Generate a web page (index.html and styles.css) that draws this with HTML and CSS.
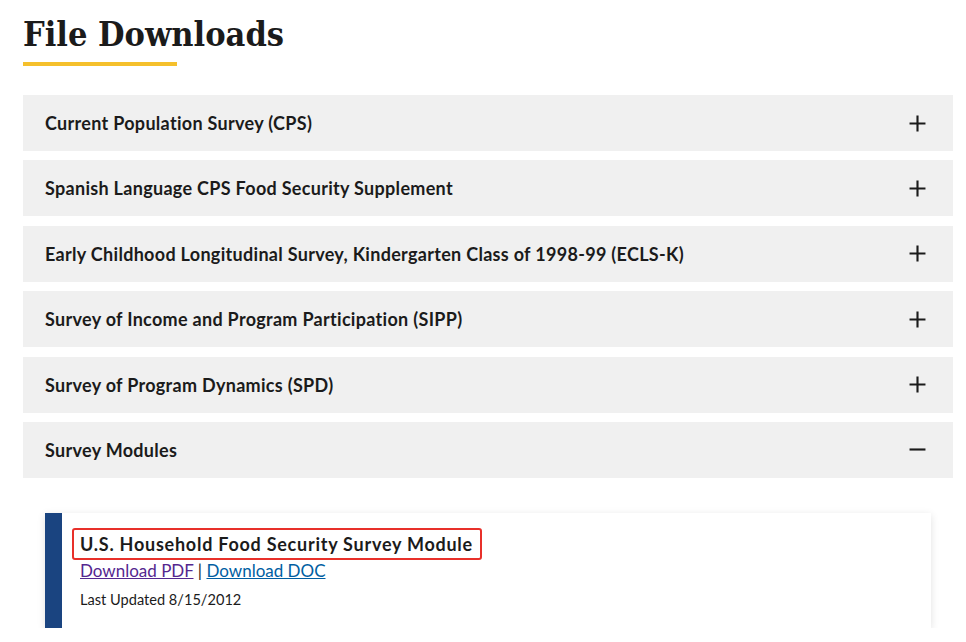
FILE: index.html
```html
<!DOCTYPE html>
<html lang="en">
<head>
<meta charset="utf-8">
<title>File Downloads</title>
<link rel="stylesheet" href="styles.css">
</head>
<body>
<main class="page">
  <h1 class="page-title">File Downloads</h1>
  <div class="accordion">
    <button class="acc-btn"><span>Current Population Survey (CPS)</span><svg class="acc-icon" viewBox="0 0 16 16"><path d="M8 0.5v15M0.5 8h15"/></svg></button>
    <button class="acc-btn"><span>Spanish Language CPS Food Security Supplement</span><svg class="acc-icon" viewBox="0 0 16 16"><path d="M8 0.5v15M0.5 8h15"/></svg></button>
    <button class="acc-btn"><span>Early Childhood Longitudinal Survey, Kindergarten Class of 1998-99 (ECLS-K)</span><svg class="acc-icon" viewBox="0 0 16 16"><path d="M8 0.5v15M0.5 8h15"/></svg></button>
    <button class="acc-btn"><span>Survey of Income and Program Participation (SIPP)</span><svg class="acc-icon" viewBox="0 0 16 16"><path d="M8 0.5v15M0.5 8h15"/></svg></button>
    <button class="acc-btn"><span>Survey of Program Dynamics (SPD)</span><svg class="acc-icon" viewBox="0 0 16 16"><path d="M8 0.5v15M0.5 8h15"/></svg></button>
    <button class="acc-btn open"><span>Survey Modules</span><svg class="acc-icon" viewBox="0 0 16 16"><path d="M0.5 8h15"/></svg></button>
    <div class="acc-panel">
      <div class="card">
        <h3 class="card-title">U.S. Household Food Security Survey Module</h3>
        <div class="card-links"><a href="#" class="visited">Download PDF</a> | <a href="#">Download DOC</a></div>
        <p class="card-date">Last Updated 8/15/2012</p>
      </div>
    </div>
  </div>
</main>
</body>
</html>
```

FILE: styles.css
```css
* { box-sizing: border-box; }
html, body { margin: 0; padding: 0; background: #fff; }
body {
  font-family: "Lato", "Open Sans", sans-serif;
  color: #1b1b1b;
}
.page {
  padding: 0 13px 0 23px;
}
.page-title {
  font-family: "DejaVu Serif Condensed", "DejaVu Serif", serif;
  font-weight: bold;
  font-size: 34px;
  line-height: 40px;
  margin: 0;
  padding-top: 14px;
  color: #1b1b1b;
}
.page-title::after {
  content: "";
  display: block;
  width: 154px;
  height: 4px;
  background: #f5c02c;
  margin-top: 8px;
}
.accordion {
  margin-top: 29px;
  display: flex;
  flex-direction: column;
  gap: 9.4px;
}
.acc-btn {
  display: flex;
  align-items: center;
  justify-content: space-between;
  width: 100%;
  height: 56px;
  padding: 0 27px 0 22px;
  border: 0;
  background: #f0f0f0;
  font-family: inherit;
  font-weight: bold;
  font-size: 18px;
  letter-spacing: 0.3px;
  color: #1b1b1b;
  text-align: left;
}
.acc-icon {
  width: 17px;
  height: 17px;
  fill: none;
  stroke: #1b1b1b;
  stroke-width: 2;
}
.acc-panel {
  padding: 26px 22px 0 22px;
}
.card {
  background: #fff;
  border-left: 17px solid #1a4480;
  box-shadow: 0 2px 8px rgba(0,0,0,0.12);
  padding: 15px 18px 16px 18px;
  height: 115px;
}
.card-title {
  display: inline-block;
  margin: 0 0 0 -8px;
  padding: 2px 7px 2px 6px;
  border: 2px solid #e8302a;
  border-radius: 3px;
  font-size: 18px;
  line-height: 24px;
  font-weight: bold;
  letter-spacing: 0.75px;
  color: #1b1b1b;
}
.card-links {
  font-size: 17px;
  line-height: 22px;
}
.card-links a { color: #005ea2; }
.card-links a.visited { color: #54278f; }
.card-date {
  margin: 8px 0 0 0;
  font-size: 14.6px;
  line-height: 20px;
}
```
